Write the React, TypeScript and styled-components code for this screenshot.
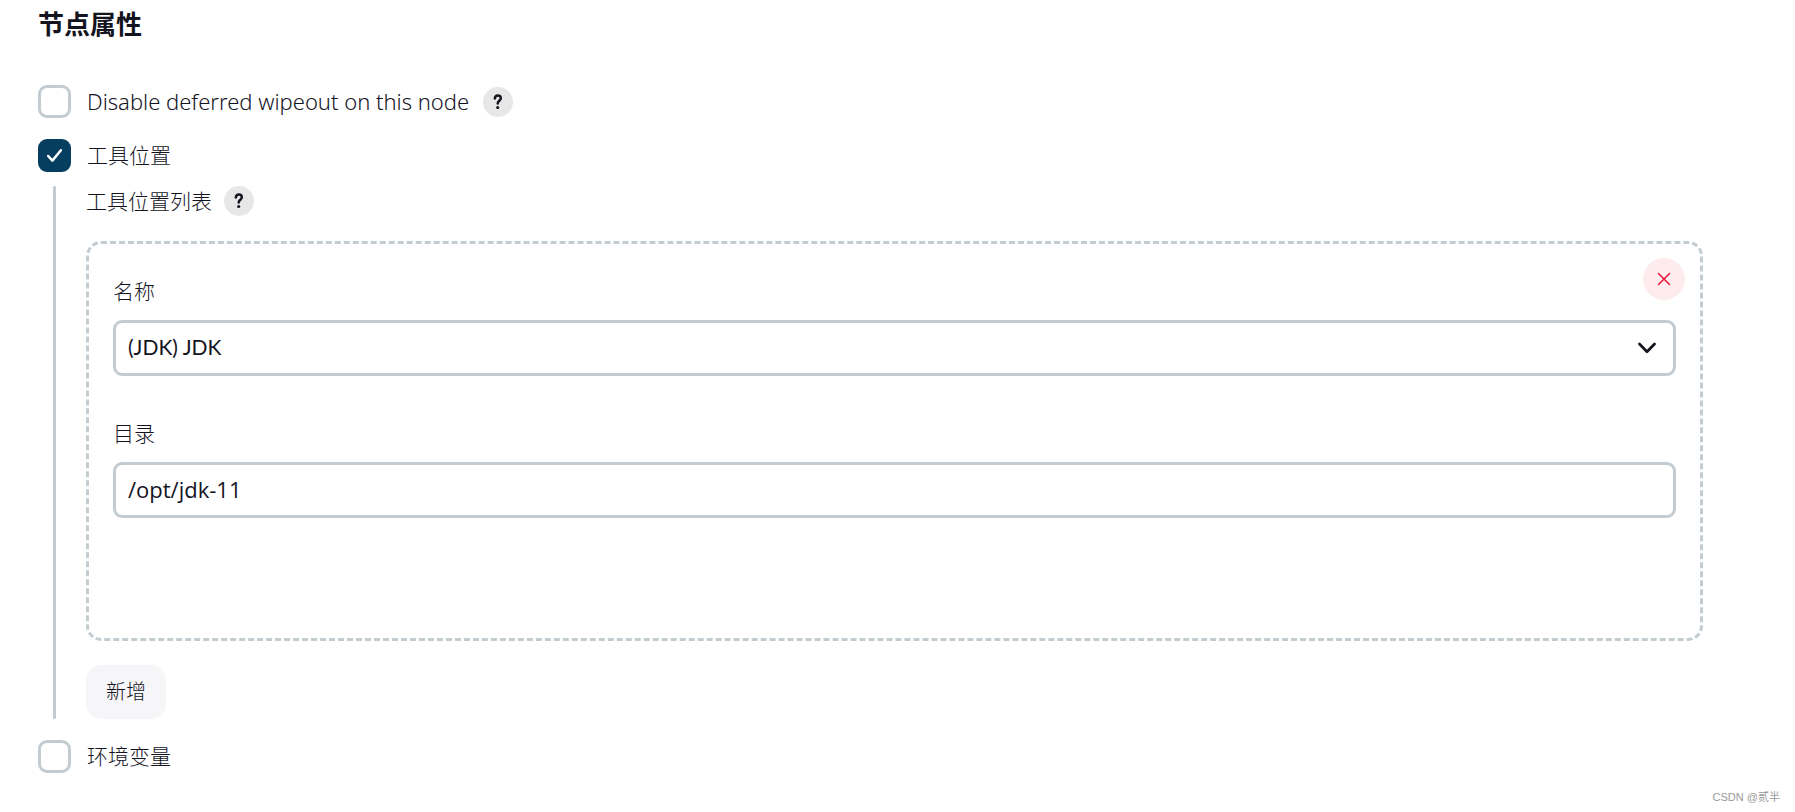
import React, { useState } from 'react';
import styled, { createGlobalStyle } from 'styled-components';

const line = '#c3ccd1';
const ink = '#14141f';

const GlobalStyle = createGlobalStyle`
  *, *::before, *::after { box-sizing: border-box; }
  body {
    margin: 0;
    background: #fff;
    color: ${ink};
    font-family: "Noto Sans", "Noto Sans CJK SC", sans-serif;
    font-size: 21px;
    line-height: 30px;
    font-weight: 300;
  }
  button, input, select { font: inherit; color: inherit; margin: 0; }
`;

const Page = styled.main`
  display: flex;
  flex-direction: column;
  min-height: 100vh;
  padding: 4px 92px 6px 38px;
`;

const Title = styled.h2`
  margin: 0 0 41px;
  font-size: 26px;
  line-height: 40px;
  font-weight: 700;
`;

const OptionRow = styled.div`
  display: flex;
  align-items: center;
  gap: 14px;
  min-height: 33px;
`;

const OptionLabel = styled.label`
  display: flex;
  align-items: center;
  gap: 16px;
  cursor: pointer;
`;

const OptionText = styled.span<{ $latin: boolean }>`
  padding-bottom: 2px;
  font-size: ${(p) => (p.$latin ? 22 : 21)}px;
`;

const Options = styled.form`
  display: flex;
  flex-direction: column;
  gap: 21px;
`;

const Option = styled.div`
  display: flex;
  flex-direction: column;
  gap: 14px;
`;

const TickBox = styled.span`
  display: grid;
  width: 33px;
  height: 33px;
  place-items: center;

  > * { grid-area: 1 / 1; }
  svg { pointer-events: none; z-index: 1; }
`;

const TickInput = styled.input`
  appearance: none;
  width: 33px;
  height: 33px;
  border: 3px solid ${line};
  border-radius: 9px;
  background: #fff;
  cursor: pointer;

  &:checked {
    border-color: #063e60;
    background: #063e60;
  }
`;

const HelpButton = styled.button`
  display: grid;
  place-items: center;
  width: 30px;
  height: 30px;
  padding: 0;
  border: 0;
  border-radius: 50%;
  background: #e7e7e8;
  cursor: pointer;
`;

const Nested = styled.div`
  display: flex;
  gap: 30px;
  margin-left: 15px;
`;

const Rail = styled.div`
  flex: none;
  width: 3px;
  border-radius: 2px;
  background: ${line};
`;

const NestedBody = styled.div`
  flex: 1;
  min-width: 0;
  display: flex;
  flex-direction: column;
  align-items: flex-start;
`;

const ListHeading = styled.div`
  display: flex;
  align-items: center;
  gap: 12px;
  margin-bottom: 25px;
`;

const Card = styled.section`
  position: relative;
  display: flex;
  flex-direction: column;
  gap: 42px;
  width: 100%;
  margin-bottom: 24px;
  padding: 32px 24px 120px;
  border: 3px dashed ${line};
  border-radius: 15px;
`;

const RemoveButton = styled.button`
  position: absolute;
  top: 14px;
  right: 15px;
  display: grid;
  place-items: center;
  width: 42px;
  height: 42px;
  padding: 0;
  border: 0;
  border-radius: 50%;
  background: #fdebed;
  color: #e6143c;
  cursor: pointer;
`;

const Field = styled.div`
  display: flex;
  flex-direction: column;
  gap: 14px;
`;

const Control = styled.div`
  display: grid;
  align-items: center;

  > * { grid-area: 1 / 1; }
  svg { justify-self: end; margin-right: 18px; pointer-events: none; }
`;

const controlBox = `
  appearance: none;
  width: 100%;
  height: 56px;
  padding: 0 12px 2px;
  border: 3px solid ${line};
  border-radius: 9px;
  background: #fff;
  font-weight: 400;
`;

const Select = styled.select`
  ${controlBox}
  font-family: Lato, "Noto Sans CJK SC", sans-serif;
`;

const TextInput = styled.input`
  ${controlBox}
  font-family: "Open Sans", "Noto Sans CJK SC", sans-serif;
  font-size: 22px;
`;

const AddButton = styled.button`
  height: 54px;
  padding: 0 20px;
  border: 0;
  border-radius: 15px;
  background: #f6f6f9;
  font-size: 20px;
  cursor: pointer;
`;

const Watermark = styled.footer`
  align-self: flex-end;
  margin: auto -77px 0 0;
  color: #999;
  font-family: "Liberation Sans", "Noto Sans CJK SC", sans-serif;
  font-size: 11px;
  line-height: 18px;
  font-weight: 400;
`;

function Help({ topic }: { topic: string }) {
  return (
    <HelpButton type="button" aria-label={`Help: ${topic}`}>
      <svg width="30" height="30" viewBox="0 0 30 30" fill="none">
        <path d="M11.8 11.500c.3-1.900 1.300-2.900 3-2.900 1.800 0 3 1.100 3 2.700 0 2.400-3.100 2.500-3.100 5.100" stroke={ink} strokeWidth="2.500" strokeLinecap="round" />
        <circle cx="14.700" cy="20.500" r="1.600" fill={ink} />
      </svg>
    </HelpButton>
  );
}

interface CheckProps {
  label: string;
  latin?: boolean;
  initial?: boolean;
  help?: boolean;
}

function Check({ label, latin = false, initial = false, help = false }: CheckProps) {
  const [on, setOn] = useState(initial);
  return (
    <OptionRow>
      <OptionLabel>
        <TickBox>
          <TickInput type="checkbox" checked={on} onChange={(e) => setOn(e.target.checked)} />
          {on && (
            <svg width="33" height="33" viewBox="0 0 33 33" fill="none">
              <path d="M10.200 17l4.200 4.600 8.500-10.300" stroke="#fff" strokeWidth="2.500" strokeLinecap="round" strokeLinejoin="round" />
            </svg>
          )}
        </TickBox>
        <OptionText $latin={latin}>{label}</OptionText>
      </OptionLabel>
      {help && <Help topic={label} />}
    </OptionRow>
  );
}

export default function App() {
  return (
    <>
      <GlobalStyle />
      <Page>
        <Title>节点属性</Title>
        <Options>
          <Check label="Disable deferred wipeout on this node" latin help />
          <Option>
            <Check label="工具位置" initial />
            <Nested>
              <Rail />
              <NestedBody>
                <ListHeading>
                  工具位置列表
                  <Help topic="工具位置列表" />
                </ListHeading>
                <Card>
                  <RemoveButton type="button" aria-label="Remove">
                    <svg width="14" height="14" viewBox="0 0 14 14" fill="none">
                      <path d="M1.500 1.500l11 11M12.500 1.500l-11 11" stroke="currentColor" strokeWidth="1.500" strokeLinecap="round" />
                    </svg>
                  </RemoveButton>
                  <Field>
                    <label htmlFor="tool-name">名称</label>
                    <Control>
                      <Select id="tool-name" defaultValue="jdk">
                        <option value="jdk">(JDK) JDK</option>
                      </Select>
                      <svg width="20" height="12" viewBox="0 0 20 12" fill="none">
                        <path d="M1.500 2l7.500 7.700 7.500-7.700" stroke={ink} strokeWidth="2.700" strokeLinecap="round" strokeLinejoin="round" />
                      </svg>
                    </Control>
                  </Field>
                  <Field>
                    <label htmlFor="tool-home">目录</label>
                    <TextInput id="tool-home" type="text" defaultValue="/opt/jdk-11" />
                  </Field>
                </Card>
                <AddButton type="button">新增</AddButton>
              </NestedBody>
            </Nested>
          </Option>
          <Check label="环境变量" />
        </Options>
        <Watermark>CSDN @贰半</Watermark>
      </Page>
    </>
  );
}
